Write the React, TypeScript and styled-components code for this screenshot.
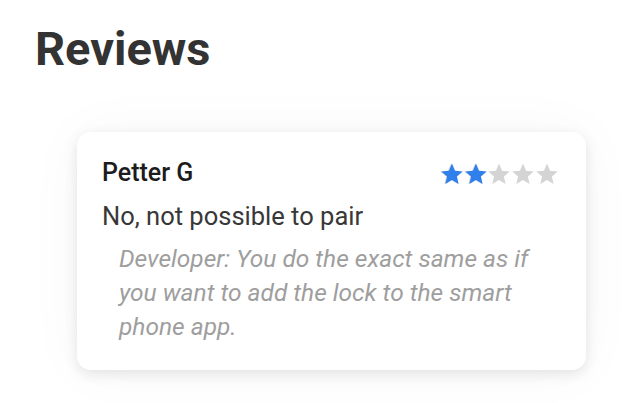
import React, { FC } from "react";
import styled, { createGlobalStyle } from "styled-components";

const GlobalStyle = createGlobalStyle`
  html, body {
    margin: 0;
    padding: 0;
    background: #ffffff;
    font-family: Roboto, "Liberation Sans", Arial, sans-serif;
  }
`;

type Review = {
  author: string;
  rating: number;
  text: string;
  reply: string;
};

const review: Review = {
  author: "Petter G",
  rating: 2,
  text: "No, not possible to pair",
  reply:
    "Developer: You do the exact same as if you want to add the lock to the smart phone app.",
};

const Star: FC<{ color: string }> = ({ color }) => (
  <StarSvg viewBox="0 0 24 24" aria-hidden="true">
    <path
      fill={color}
      d="M12 1.6l3.05 7.1 7.7.7-5.85 5.07 1.75 7.53L12 18.05 5.35 22l1.75-7.53L1.25 9.4l7.7-.7z"
    />
  </StarSvg>
);

const Rating: FC<{ value: number }> = ({ value }) => (
  <RatingWrap>
    <StarRow>
      {[0, 1, 2, 3, 4].map((i) => (
        <Star key={i} color="#d4d4d4" />
      ))}
    </StarRow>
    <FilledRow>
      {Array.from({ length: value }).map((_, i) => (
        <Star key={i} color="#2f80ed" />
      ))}
    </FilledRow>
  </RatingWrap>
);

const ReviewCard: FC<{ review: Review }> = ({ review }) => (
  <Card>
    <CardHead>
      <Author>{review.author}</Author>
      <Rating value={review.rating} />
    </CardHead>
    <Body>{review.text}</Body>
    <Reply>{review.reply}</Reply>
  </Card>
);

const App: FC = () => (
  <>
    <GlobalStyle />
    <Page>
      <Title>Reviews</Title>
      <CardList>
        <ReviewCard review={review} />
      </CardList>
    </Page>
  </>
);

export default App;

const Page = styled.div`
  width: 626px;
  height: 403px;
  overflow: hidden;
  padding: 25px 0 0 35px;
  box-sizing: border-box;
`;

const Title = styled.h1`
  margin: 0;
  font-size: 47px;
  line-height: 47px;
  font-weight: 700;
  color: #333333;
`;

const CardList = styled.div`
  display: flex;
  flex-direction: column;
  padding: 60px 0 0 42px;
`;

const Card = styled.div`
  width: 509px;
  padding: 26px 27px 26px 25px;
  box-sizing: border-box;
  background: #ffffff;
  border-radius: 14px;
  box-shadow: 0 4px 14px rgba(0, 0, 0, 0.1), 0 0 60px rgba(0, 0, 0, 0.035);
`;

const CardHead = styled.div`
  display: flex;
  align-items: center;
  justify-content: space-between;
  margin-bottom: 12px;
`;

const Author = styled.div`
  font-size: 25px;
  line-height: 29px;
  font-weight: 500;
  color: #1c1c1c;
`;

const RatingWrap = styled.div`
  position: relative;
  margin-top: 2px;
`;

const StarRow = styled.div`
  display: flex;
`;

const FilledRow = styled(StarRow)`
  position: absolute;
  left: 0;
  top: 0;
  transform: translateX(1px);
`;

const StarSvg = styled.svg`
  width: 24px;
  height: 24px;
  display: block;
`;

const Body = styled.div`
  font-size: 25.5px;
  line-height: 34px;
  color: #383838;
`;

const Reply = styled.div`
  margin-top: 9px;
  padding-left: 17px;
  font-size: 24.5px;
  line-height: 34px;
  font-style: italic;
  color: #9e9e9e;
`;
